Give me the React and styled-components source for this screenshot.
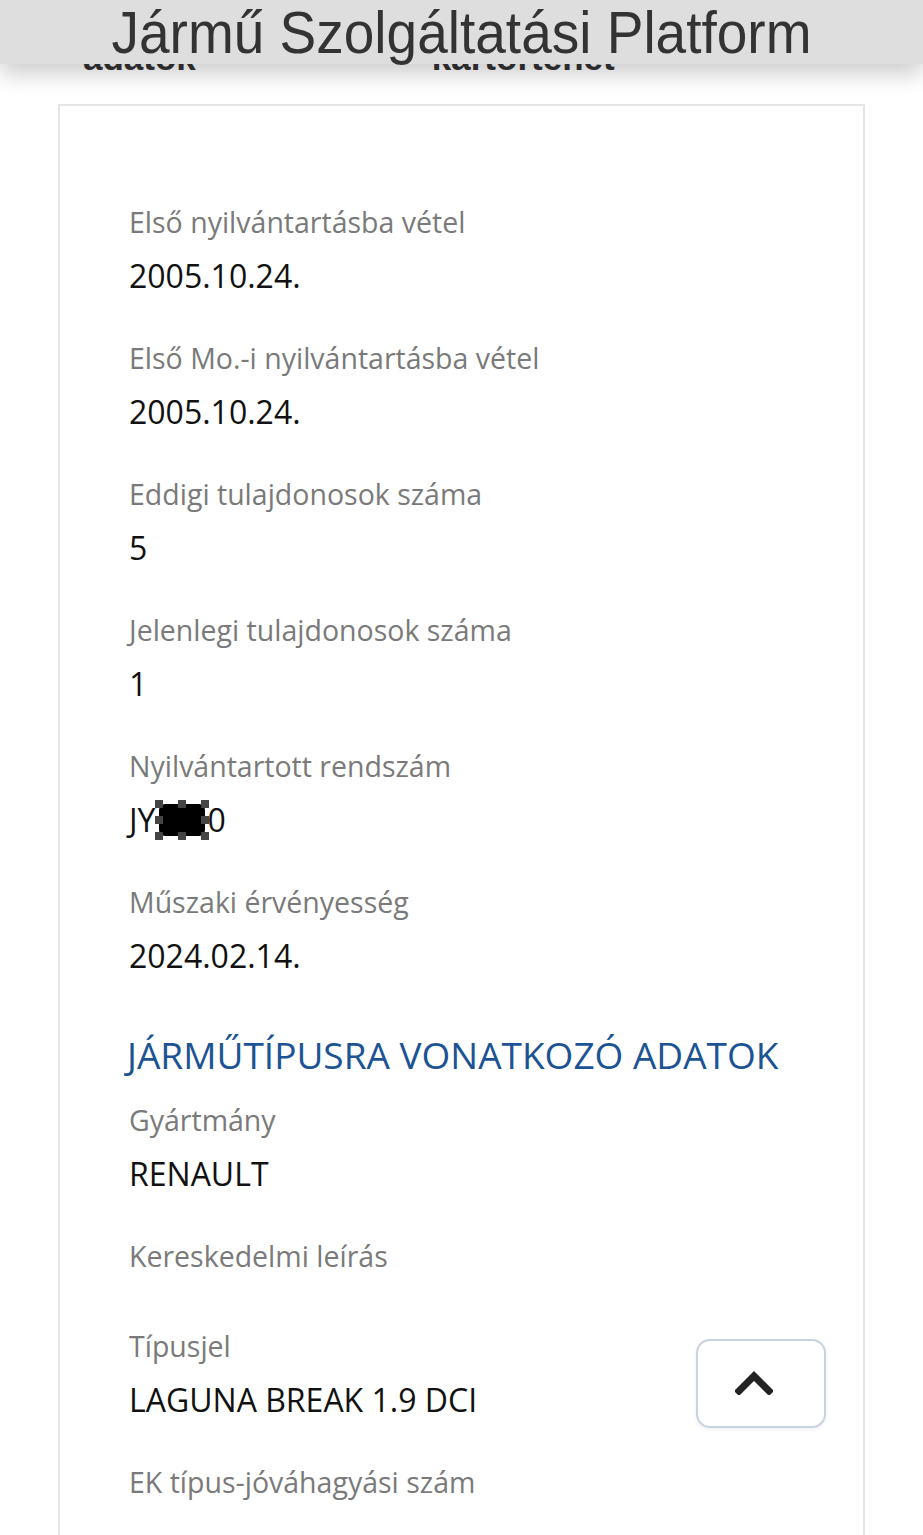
import React from 'react';
import styled, { createGlobalStyle } from 'styled-components';

const GlobalStyle = createGlobalStyle`
	html, body {
		margin: 0;
		padding: 0;
		background: #fff;
	}
	body {
		font-family: "Open Sans", "Noto Sans", sans-serif;
		overflow: hidden;
	}
`;

const generalFields = [
	{ label: 'Első nyilvántartásba vétel', value: '2005.10.24.' },
	{ label: 'Első Mo.-i nyilvántartásba vétel', value: '2005.10.24.' },
	{ label: 'Eddigi tulajdonosok száma', value: '5' },
	{ label: 'Jelenlegi tulajdonosok száma', value: '1' },
	{ label: 'Nyilvántartott rendszám', value: 'plate' },
	{ label: 'Műszaki érvényesség', value: '2024.02.14.' },
];

const typeFields = [
	{ label: 'Gyártmány', value: 'RENAULT' },
	{ label: 'Kereskedelmi leírás', value: '' },
	{ label: 'Típusjel', value: 'LAGUNA BREAK 1.9 DCI' },
	{ label: 'EK típus-jóváhagyási szám', value: '' },
];

function MaskedPlate() {
	return (
		<>
			JY
			<Mask>
				<Handle $x="0%" $y="0%" />
				<Handle $x="50%" $y="0%" />
				<Handle $x="100%" $y="0%" />
				<Handle $x="0%" $y="50%" />
				<Handle $x="100%" $y="50%" />
				<Handle $x="0%" $y="100%" />
				<Handle $x="50%" $y="100%" />
				<Handle $x="100%" $y="100%" />
			</Mask>
			0
		</>
	);
}

function Field({ label, value }) {
	return (
		<FieldBox $empty={!value}>
			<Label>{label}</Label>
			{value && <Value>{value === 'plate' ? <MaskedPlate /> : value}</Value>}
		</FieldBox>
	);
}

function App() {
	return (
		<>
			<GlobalStyle />
			<Header>
				<Title>Jármű Szolgáltatási Platform</Title>
			</Header>
			<Page>
				<Tabs>
					<Tab>adatok</Tab>
					<Tab>kártörténet</Tab>
				</Tabs>
				<Card>
					{generalFields.map((f) => (
						<Field key={f.label} {...f} />
					))}
					<SectionTitle>JÁRMŰTÍPUSRA VONATKOZÓ ADATOK</SectionTitle>
					{typeFields.map((f) => (
						<Field key={f.label} {...f} />
					))}
				</Card>
			</Page>
			<ScrollTop aria-label="Vissza a tetejére">
				<svg width="38" height="26" viewBox="0 0 38 26">
					<polyline
						points="4,22 19,7 34,22"
						fill="none"
						stroke="#222"
						strokeWidth="7"
						strokeLinecap="square"
						strokeLinejoin="miter"
					/>
				</svg>
			</ScrollTop>
		</>
	);
}

const Header = styled.header`
	position: fixed;
	top: 0;
	left: 0;
	right: 0;
	height: 64px;
	z-index: 10;
	display: flex;
	justify-content: center;
	align-items: center;
	background: #dedede;
	box-shadow: 0 10px 22px rgba(0, 0, 0, 0.2);
`;

const Title = styled.h1`
	margin: 0;
	font-family: "Liberation Sans", Arial, sans-serif;
	font-weight: 400;
	font-size: 55px;
	line-height: 64px;
	color: #333;
	transform: scaleY(1.08);
	white-space: nowrap;
`;

const Page = styled.main`
	display: flex;
	flex-direction: column;
`;

const Tabs = styled.nav`
	display: flex;
	gap: 236px;
	padding: 38px 0 0 83px;
	height: 38px;
`;

const Tab = styled.span`
	font-family: "Liberation Sans", Arial, sans-serif;
	font-weight: 700;
	font-size: 35px;
	line-height: 40px;
	color: #333;
`;

const Card = styled.section`
	margin: 28px 0 0 58px;
	width: 807px;
	min-height: 1500px;
	box-sizing: border-box;
	border: 2px solid #e6e6e6;
	border-bottom: none;
	padding: 98px 40px 0 69px;
	display: flex;
	flex-direction: column;
`;

const FieldBox = styled.div`
	display: flex;
	flex-direction: column;
	margin-bottom: ${(p) => (p.$empty ? '54px' : '44px')};
`;

const Label = styled.div`
	font-size: 28.5px;
	line-height: 36px;
	color: #7a7a7a;
	white-space: nowrap;
`;

const Value = styled.div`
	margin-top: 16px;
	height: 40px;
	font-size: 32px;
	line-height: 40px;
	color: #111;
	display: flex;
	align-items: center;
`;

const Mask = styled.span`
	position: relative;
	display: inline-block;
	width: 46px;
	height: 32px;
	margin: 0 2px 0 4px;
	background: #000;
	border-radius: 6px;
`;

const Handle = styled.span`
	position: absolute;
	left: ${(p) => p.$x};
	top: ${(p) => p.$y};
	width: 8px;
	height: 8px;
	background: #444;
	transform: translate(-50%, -50%);
`;

const SectionTitle = styled.h2`
	margin: 11px 0 23px -2px;
	font-weight: 400;
	font-size: 37px;
	line-height: 48px;
	color: #1b5394;
	white-space: nowrap;
`;

const ScrollTop = styled.button`
	position: fixed;
	left: 696px;
	top: 1339px;
	width: 130px;
	height: 89px;
	display: flex;
	justify-content: center;
	align-items: center;
	background: #fff;
	border: 2px solid #c9d2e2;
	border-radius: 14px;
	box-shadow: 0 2px 4px rgba(0, 0, 0, 0.06);
	padding: 0 14px 4px 0;
	cursor: pointer;
`;

export default App;
